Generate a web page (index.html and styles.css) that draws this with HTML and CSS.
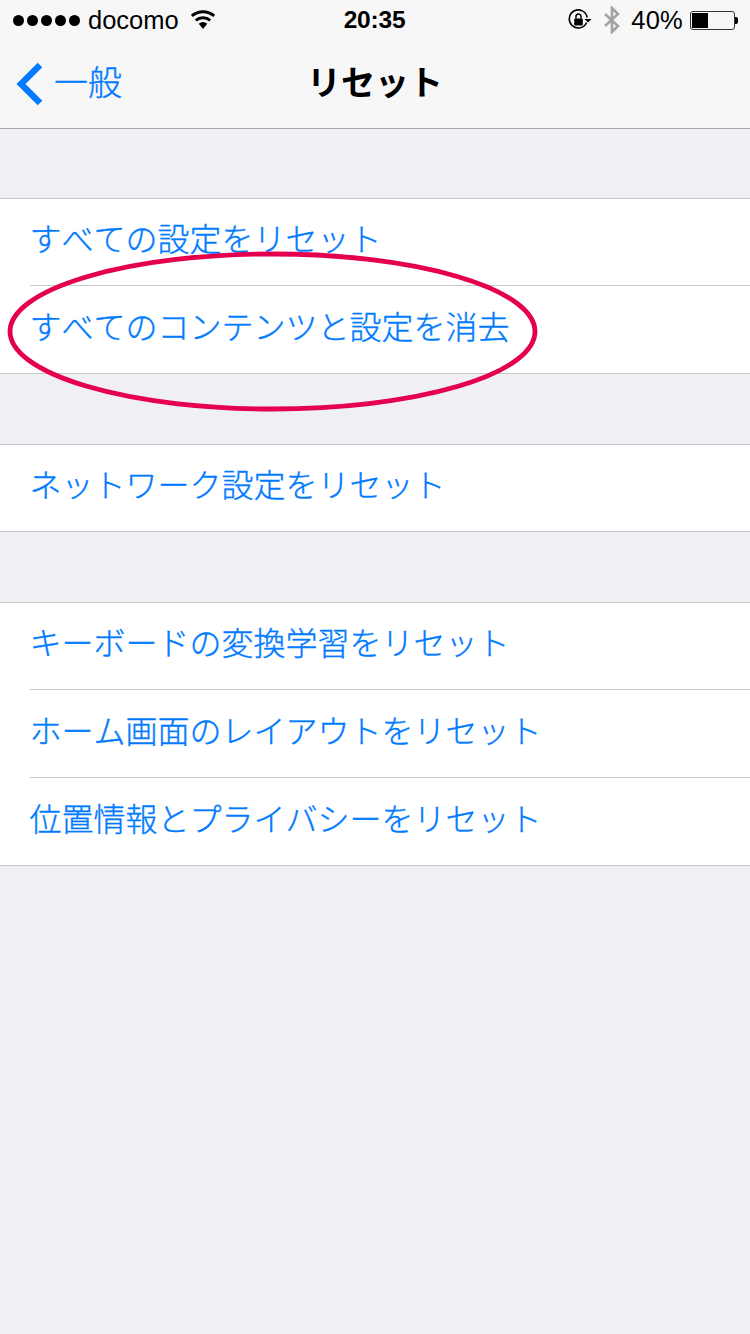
FILE: index.html
```html
<!DOCTYPE html>
<html lang="ja">
<head>
<meta charset="utf-8">
<title>リセット</title>
<link rel="stylesheet" href="styles.css">
</head>
<body>
<div class="page">
  <header class="header">
    <div class="status">
      <div class="status-left">
        <div class="dots"><i></i><i></i><i></i><i></i><i></i></div>
        <span class="carrier">docomo</span>
        <svg class="wifi" width="28" height="21.5" viewBox="0 0 26 20"><path d="M13 19.5 9 14.6a6.2 6.2 0 0 1 8 0z" fill="#000"/><path d="M6.3 11.6a10.3 10.3 0 0 1 13.4 0M2.6 7.4a15.6 15.6 0 0 1 20.8 0" fill="none" stroke="#000" stroke-width="2.7"/></svg>
      </div>
      <div class="time">20:35</div>
      <div class="status-right">
        <svg class="lock" width="24" height="22" viewBox="0 0 24 22"><path d="M18.6 13.5A9 9 0 1 1 19.2 8.5" fill="none" stroke="#000" stroke-width="1.6"/><path d="M16.5 10h7l-3.5 3.4z" fill="#000"/><rect x="6.2" y="9.5" width="8.6" height="7" rx="1" fill="#000"/><path d="M8 9.5V7.6a2.5 2.5 0 0 1 5 0v1.9" fill="none" stroke="#000" stroke-width="1.5"/></svg>
        <svg class="bt" width="18" height="28" viewBox="0 0 18 28"><path d="M2 8 15 20 9 26V2l6 6L2 20" fill="none" stroke="#a3a3a3" stroke-width="2.6"/></svg>
        <span class="pct">40%</span>
        <div class="battery"><div class="battery-body"><div class="battery-fill"></div></div><div class="battery-tip"></div></div>
      </div>
    </div>
    <nav class="nav">
      <div class="back">
        <svg width="28" height="44" viewBox="0 0 28 44"><path d="M25 3 6 22l19 19" fill="none" stroke="#007aff" stroke-width="6.4"/></svg>
        <span class="back-label">一般</span>
      </div>
      <h1 class="title">リセット</h1>
    </nav>
  </header>
  <main class="content">
    <ul class="group">
      <li class="row"><span class="row-label">すべての設定をリセット</span></li>
      <li class="row"><span class="row-label">すべてのコンテンツと設定を消去</span></li>
    </ul>
    <ul class="group">
      <li class="row"><span class="row-label">ネットワーク設定をリセット</span></li>
    </ul>
    <ul class="group">
      <li class="row"><span class="row-label">キーボードの変換学習をリセット</span></li>
      <li class="row"><span class="row-label">ホーム画面のレイアウトをリセット</span></li>
      <li class="row"><span class="row-label">位置情報とプライバシーをリセット</span></li>
    </ul>
  </main>
  <svg class="mark" width="750" height="420" viewBox="0 0 750 420"><ellipse cx="272.5" cy="331.5" rx="262.5" ry="77.5" fill="none" stroke="#e5004f" stroke-width="4.8"/></svg>
</div>
</body>
</html>
```
FILE: styles.css
```css
* { box-sizing: border-box; }
html, body { margin: 0; padding: 0; }
body {
  width: 750px;
  height: 1334px;
  overflow: hidden;
  background: #efeff4;
  font-family: "Noto Sans CJK JP", "Liberation Sans", sans-serif;
  font-kerning: none;
}
.page { position: relative; width: 750px; height: 1334px; }
.header { height: 129px; background: #f7f7f8; border-bottom: 1px solid #a9a9ad; }
.status {
  height: 40px;
  padding: 0 12px 0 13px;
  display: grid;
  grid-template-columns: 1fr auto 1fr;
  align-items: center;
  color: #000;
  font-family: "Liberation Sans", sans-serif;
}
.status-left { display: flex; align-items: center; }
.dots { display: flex; gap: 3px; }
.dots i { width: 11px; height: 11px; border-radius: 50%; background: #000; display: block; }
.carrier { font-size: 25.5px; margin-left: 8px; }
.wifi { margin-left: 10px; margin-top: -2px; }
.time { font-size: 24.5px; font-weight: 700; letter-spacing: -.2px; margin-right: 2px; }
.status-right { display: flex; align-items: center; justify-content: flex-end; }
.lock { margin-right: 11px; }
.bt { margin-right: 10px; }
.pct { font-size: 25.5px; letter-spacing: .2px; margin-right: 7px; }
.battery { display: flex; align-items: center; }
.battery-body { width: 45px; height: 19px; border: 1px solid #333; border-radius: 3px; padding: 1px; }
.battery-fill { width: 16px; height: 100%; background: #000; }
.battery-tip { width: 3px; height: 7px; background: #000; border-radius: 0 2px 2px 0; }
.nav { height: 88px; padding-bottom: 8px; position: relative; display: flex; align-items: center; justify-content: center; }
.back { position: absolute; left: 15px; top: 0; height: 88px; display: flex; align-items: center; color: #007aff; }
.back-label { font-size: 34px; font-weight: 300; -webkit-text-stroke: .35px #007aff; margin-left: 11px; padding-bottom: 8px; }
.title { margin: 0; font-size: 34px; font-weight: 700; color: #000; }
.content { padding-top: 69px; }
.group {
  list-style: none;
  margin: 0 0 70px;
  padding: 0;
  background: #fff;
  border-top: 1px solid #c8c7cc;
  border-bottom: 1px solid #c8c7cc;
}
.row { height: 86px; margin-left: 30px; padding-bottom: 11px; display: flex; align-items: center; }
.row + .row { height: 88px; padding-bottom: 9px; border-top: 1px solid #c8c7cc; }
.row-label { margin-left: -.5px; font-size: 32px; font-weight: 300; -webkit-text-stroke: .35px #007aff; color: #007aff; white-space: nowrap; line-height: 1; }
.mark { position: absolute; left: 0; top: 0; pointer-events: none; }
```
